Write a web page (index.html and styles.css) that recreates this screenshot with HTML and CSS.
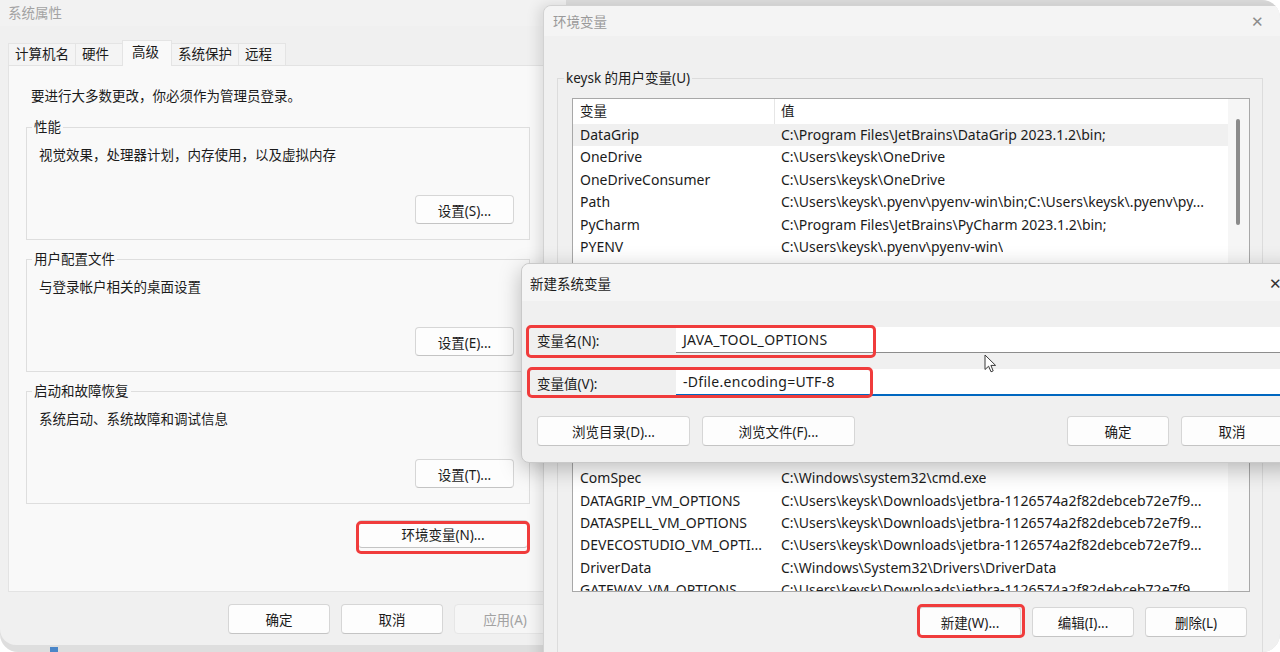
FILE: index.html
```html
<!DOCTYPE html>
<html lang="zh-CN">

<head>
    <meta charset="utf-8">
    <link rel="stylesheet" href="styles.css">
</head>

<body>
<div class="screen">

    <span class="task-icon"></span>

    <!-- 系统属性 -->
    <div class="win sysprops">
        <div class="titlebar">系统属性</div>
        <div class="tabs">
            <span class="tab">计算机名</span>
            <span class="tab">硬件</span>
            <span class="tab active">高级</span>
            <span class="tab">系统保护</span>
            <span class="tab">远程</span>
        </div>
        <div class="tabpanel">
            <p class="notice">要进行大多数更改，你必须作为管理员登录。</p>

            <fieldset class="group">
                <legend>性能</legend>
                <p>视觉效果，处理器计划，内存使用，以及虚拟内存</p>
                <div class="btn-row"><button class="btn">设置(S)...</button></div>
            </fieldset>

            <fieldset class="group">
                <legend>用户配置文件</legend>
                <p>与登录帐户相关的桌面设置</p>
                <div class="btn-row"><button class="btn">设置(E)...</button></div>
            </fieldset>

            <fieldset class="group">
                <legend>启动和故障恢复</legend>
                <p>系统启动、系统故障和调试信息</p>
                <div class="btn-row"><button class="btn">设置(T)...</button></div>
            </fieldset>

            <div class="btn-row env-row"><button class="btn env-btn">环境变量(N)...</button></div>
        </div>
        <div class="footer">
            <button class="btn">确定</button>
            <button class="btn">取消</button>
            <button class="btn disabled">应用(A)</button>
        </div>
    </div>

    <!-- 环境变量 -->
    <div class="win envvars">
        <div class="titlebar">
            <span>环境变量</span>
            <span class="close">✕</span>
        </div>
        <div class="env-body">
            <fieldset class="vgroup">
                <legend>keysk 的用户变量(U)</legend>
                <div class="list user-list">
                    <div class="list-main">
                        <div class="row head"><span class="c-name">变量</span><span class="c-val">值</span></div>
                        <div class="row sel"><span class="c-name">DataGrip</span><span class="c-val">C:\Program Files\JetBrains\DataGrip 2023.1.2\bin;</span></div>
                        <div class="row"><span class="c-name">OneDrive</span><span class="c-val">C:\Users\keysk\OneDrive</span></div>
                        <div class="row"><span class="c-name">OneDriveConsumer</span><span class="c-val">C:\Users\keysk\OneDrive</span></div>
                        <div class="row"><span class="c-name">Path</span><span class="c-val">C:\Users\keysk\.pyenv\pyenv-win\bin;C:\Users\keysk\.pyenv\py...</span></div>
                        <div class="row"><span class="c-name">PyCharm</span><span class="c-val">C:\Program Files\JetBrains\PyCharm 2023.1.2\bin;</span></div>
                        <div class="row"><span class="c-name">PYENV</span><span class="c-val">C:\Users\keysk\.pyenv\pyenv-win\</span></div>
                        <div class="row"><span class="c-name">PYENV_HOME</span><span class="c-val">C:\Users\keysk\.pyenv\pyenv-win\</span></div>
                    </div>
                    <div class="track"><span class="thumb"></span></div>
                </div>
                <div class="btn-row list-btns">
                    <button class="btn">新建(N)...</button>
                    <button class="btn">编辑(E)...</button>
                    <button class="btn">删除(D)</button>
                </div>
            </fieldset>

            <fieldset class="vgroup">
                <legend>系统变量(S)</legend>
                <div class="list sys-list">
                    <div class="list-main">
                        <div class="row head"><span class="c-name">变量</span><span class="c-val">值</span></div>
                        <div class="row"></div>
                        <div class="row"></div>
                        <div class="row"></div>
                        <div class="row"><span class="c-name">ComSpec</span><span class="c-val">C:\Windows\system32\cmd.exe</span></div>
                        <div class="row"><span class="c-name">DATAGRIP_VM_OPTIONS</span><span class="c-val">C:\Users\keysk\Downloads\jetbra-1126574a2f82debceb72e7f9...</span></div>
                        <div class="row"><span class="c-name">DATASPELL_VM_OPTIONS</span><span class="c-val">C:\Users\keysk\Downloads\jetbra-1126574a2f82debceb72e7f9...</span></div>
                        <div class="row"><span class="c-name">DEVECOSTUDIO_VM_OPTI...</span><span class="c-val">C:\Users\keysk\Downloads\jetbra-1126574a2f82debceb72e7f9...</span></div>
                        <div class="row"><span class="c-name">DriverData</span><span class="c-val">C:\Windows\System32\Drivers\DriverData</span></div>
                        <div class="row"><span class="c-name">GATEWAY_VM_OPTIONS</span><span class="c-val">C:\Users\keysk\Downloads\jetbra-1126574a2f82debceb72e7f9...</span></div>
                    </div>
                    <div class="track"></div>
                </div>
                <div class="btn-row list-btns sys-btns">
                    <button class="btn">新建(W)...</button>
                    <button class="btn">编辑(I)...</button>
                    <button class="btn">删除(L)</button>
                </div>
            </fieldset>
        </div>
    </div>

    <!-- 新建系统变量 -->
    <div class="win newvar">
        <div class="titlebar">
            <span>新建系统变量</span>
            <span class="close">✕</span>
        </div>
        <div class="nv-body">
            <div class="field">
                <label>变量名(N):</label>
                <span class="input">JAVA_TOOL_OPTIONS</span>
            </div>
            <div class="field focus">
                <label>变量值(V):</label>
                <span class="input">-Dfile.encoding=UTF-8</span>
            </div>
            <div class="nv-btns">
                <button class="btn browse">浏览目录(D)...</button>
                <button class="btn browse">浏览文件(F)...</button>
                <span class="spacer"></span>
                <button class="btn">确定</button>
                <button class="btn">取消</button>
            </div>
        </div>
    </div>

    <!-- red annotation boxes -->
    <span class="mark m-env"></span>
    <span class="mark m-name"></span>
    <span class="mark m-val"></span>
    <span class="mark m-new"></span>

    <svg class="cursor" width="14" height="20" viewBox="0 0 14 20">
        <path d="M1 1 L1 15.5 L4.6 12.2 L7 17.8 L9.2 16.9 L6.9 11.4 L11.6 11.4 Z" fill="#fff" stroke="#3a3a3a" stroke-width="1" stroke-linejoin="round"/>
    </svg>
</div>
</body>

</html>
```

FILE: styles.css
```css
* {
    box-sizing: border-box;
}

html,
body {
    margin: 0;
    background: #fff;
}

body {
    font-family: "Noto Sans", "Noto Sans CJK SC", sans-serif;
    font-size: 13.5px;
    color: #1b1b1b;
}

.screen {
    position: relative;
    width: 1280px;
    height: 652px;
    overflow: hidden;
    background: #dedede;
    border-radius: 0 18px 18px 18px;
}

p {
    margin: 0;
    line-height: 20px;
}

.btn {
    font: inherit;
    color: #1b1b1b;
    height: 30px;
    width: 102px;
    padding: 0;
    background: #fdfdfd;
    border: 1px solid #d6d6d6;
    border-bottom-color: #c4c4c4;
    border-radius: 4px;
}

.btn.disabled {
    color: #a2a2a2;
    background: #f6f6f6;
    border-color: #e6e6e6;
}

.btn-row {
    display: flex;
    justify-content: flex-end;
    gap: 11px;
}

.win {
    position: absolute;
}

.task-icon {
    position: absolute;
    left: 50px;
    top: 647px;
    width: 8px;
    height: 8px;
    background: #4a86c8;
}

/* ---------- 系统属性 ---------- */
.sysprops {
    left: 0;
    top: 0;
    width: 566px;
    height: 645px;
    background: #f0f0f0;
    border-radius: 8px 8px 16px 16px;
}

.sysprops .titlebar {
    height: 26px;
    line-height: 26px;
    padding-left: 8px;
    color: #a3a3a3;
    background: #f2f2f2;
}

.tabs {
    position: relative;
    z-index: 1;
    display: flex;
    align-items: flex-end;
    height: 25px;
    margin: 14px 0 0 8px;
}

.tab {
    height: 22px;
    line-height: 21px;
    min-width: 48px;
    padding: 0 6px;
    margin-right: -1px;
    background: #f4f4f4;
    border: 1px solid #e4e4e4;
    border-bottom: none;
}

.tab.active {
    height: 26px;
    line-height: 22px;
    margin-bottom: -1px;
    padding: 0 12px 0 9px;
    background: #f9f9f9;
}

.tabpanel {
    height: 527px;
    margin: 0 18px 0 8px;
    padding: 20px 17px 0;
    background: #f9f9f9;
    border: 1px solid #e3e3e3;
}

.notice {
    padding-left: 5px;
}

.group {
    margin: 11px 0 0;
    padding: 8px 15px 15px 12px;
    border: 1px solid #dedede;
    min-width: 0;
}

.group + .group {
    margin-top: 9px;
}

.group legend,
.vgroup legend {
    padding: 0 2px;
    margin-left: -7px;
    line-height: 20px;
}

.group .btn-row {
    margin-top: 30px;
}

.group .btn {
    width: 99px;
    height: 29px;
}

.env-row {
    margin-top: 16px;
    padding-right: 2px;
}

.env-btn {
    width: 170px;
    height: 28px;
}

.footer {
    display: flex;
    justify-content: flex-end;
    gap: 11px;
    padding: 12px 10px 0 0;
}

/* ---------- 环境变量 ---------- */
.envvars {
    left: 543px;
    top: 5px;
    width: 760px;
    height: 680px;
    background: #f0f0f0;
    border: 1px solid #d2d2d2;
    border-radius: 8px 0 0 0;
    box-shadow: -4px 0 14px rgba(0, 0, 0, 0.12);
}

.titlebar {
    display: flex;
    align-items: center;
}

.envvars .titlebar {
    height: 30px;
    margin-bottom: 2px;
    padding-left: 9px;
    color: #9a9a9a;
    background: #f4f4f4;
    border-radius: 8px 0 0 0;
}

.close {
    margin-left: auto;
    width: 46px;
    text-align: center;
    font-size: 15px;
    color: #8c8c8c;
}

.envvars .close {
    margin-right: 22px;
}

.env-body {
    padding: 30px 39px 0 13px;
}

.vgroup {
    margin: 0;
    padding: 10px 12px 9px 14px;
    border: 1px solid #dcdcdc;
    min-width: 0;
}

.vgroup legend {
    margin-left: -8px;
}

.vgroup + .vgroup {
    margin-top: 7px;
    padding-bottom: 20px;
}

.list {
    display: flex;
    height: 190px;
    background: #fff;
    border: 1px solid #a8a8a8;
    overflow: hidden;
}

.sys-list {
    height: 218px;
}

.list-main {
    flex: 1;
    min-width: 0;
}

.row {
    display: flex;
    height: 22.4px;
    line-height: 22.4px;
    font-size: 14px;
    white-space: nowrap;
}

.row.head {
    height: 25px;
    line-height: 25px;
    font-size: 13.5px;
}

.row.sel {
    background: #f0f0f0;
}

.c-name {
    width: 202px;
    padding-left: 7px;
    flex: none;
    overflow: hidden;
}

.head .c-name {
    border-right: 1px solid #e6e6e6;
}

.c-val {
    padding-left: 6px;
    overflow: hidden;
}

.track {
    width: 21px;
    flex: none;
    background: #f6f6f6;
    padding-top: 20px;
}

.thumb {
    display: block;
    width: 4px;
    height: 106px;
    margin-left: 8px;
    background: #8b8b8b;
    border-radius: 2px;
}

.list-btns {
    margin-top: 9px;
    padding-right: 3px;
}

.sys-btns {
    margin-top: 15px;
}

/* ---------- 新建系统变量 ---------- */
.newvar {
    left: 521px;
    top: 263px;
    width: 780px;
    height: 200px;
    background: #f0f0f0;
    border: 1px solid #c9c9c9;
    border-radius: 8px 0 0 8px;
    box-shadow: 0 6px 22px rgba(0, 0, 0, 0.26);
}

.newvar .titlebar {
    height: 37px;
    padding-left: 8px;
    background: #f5f5f5;
    border-radius: 8px 0 0 0;
}

.newvar .close {
    margin-right: 2px;
    color: #333;
}

.nv-body {
    padding: 26px 17px 0 15px;
}

.field {
    display: flex;
    align-items: center;
    height: 26px;
}

.field label {
    width: 139px;
    flex: none;
}

.field .input {
    flex: 1;
    height: 26px;
    line-height: 25px;
    padding-left: 7px;
    font-size: 14px;
    letter-spacing: 0.3px;
    background: #fff;
    border-bottom: 1px solid #8d8d8d;
}

.field.focus {
    height: 27px;
    margin-top: 16px;
}

.field.focus .input {
    height: 27px;
    border-bottom: 2px solid #0067c0;
}

.nv-btns {
    display: flex;
    gap: 12px;
    margin-top: 20px;
}

.nv-btns .spacer {
    flex: 1;
}

.btn.browse {
    width: 153px;
}

/* ---------- annotations ---------- */
.mark {
    position: absolute;
    border: 3px solid #f03c3c;
    border-radius: 5px;
}

.m-env {
    left: 356px;
    top: 521px;
    width: 174px;
    height: 33px;
}

.m-name {
    left: 526px;
    top: 325px;
    width: 350px;
    height: 33px;
}

.m-val {
    left: 527px;
    top: 367px;
    width: 346px;
    height: 31px;
}

.m-new {
    left: 917px;
    top: 604px;
    width: 108px;
    height: 34px;
}

.cursor {
    position: absolute;
    left: 984px;
    top: 354px;
}
```
